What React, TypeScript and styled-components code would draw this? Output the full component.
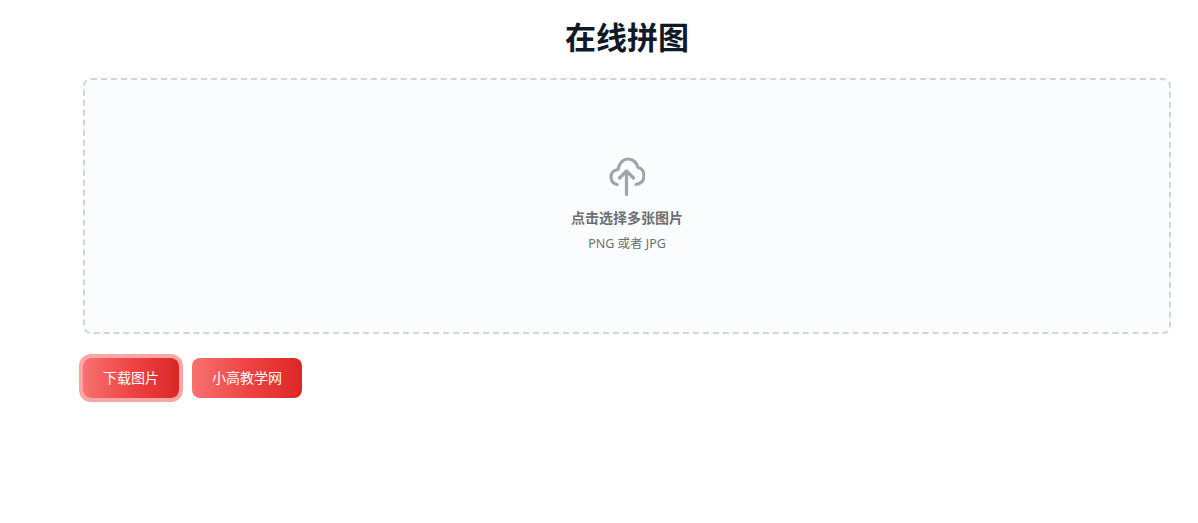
import styled, { createGlobalStyle } from "styled-components";

const GlobalStyle = createGlobalStyle`
  html, body {
    margin: 0;
    padding: 0;
    background: #fff;
    font-family: "Noto Sans", "Noto Sans CJK SC", sans-serif;
  }
`;

const Page = styled.div`
  box-sizing: border-box;
  min-height: 100vh;
  padding: 16px 27px 0 83px;
`;

const Title = styled.h1`
  margin: 0 0 20px;
  text-align: center;
  font-size: 31px;
  line-height: 42px;
  font-weight: 700;
  color: #111827;
`;

const DropZone = styled.label`
  display: flex;
  flex-direction: column;
  align-items: center;
  justify-content: center;
  box-sizing: border-box;
  height: 256px;
  padding-bottom: 1px;
  border: 2px dashed #d1d5db;
  border-radius: 8px;
  background: #fbfcfe;
  cursor: pointer;
`;

const UploadIcon = styled.svg`
  display: block;
  width: 36px;
  height: 40px;
  margin-bottom: 11px;
  fill: none;
  stroke: #9fa4a7;
  stroke-width: 3.2;
  stroke-linecap: round;
  stroke-linejoin: round;
`;

const Hint = styled.p`
  margin: 0 0 6px;
  font-size: 14px;
  line-height: 20px;
  font-weight: 600;
  color: #6b7073;
`;

const SubHint = styled.p`
  margin: 0;
  font-size: 12.5px;
  line-height: 20px;
  color: #6b7073;
`;

const Actions = styled.div`
  display: flex;
  gap: 13px;
  margin-top: 24px;
`;

const Button = styled.button<{ $focused?: boolean }>`
  height: 40px;
  padding: 0 20px 2px;
  border: 0;
  border-radius: 8px;
  font-family: inherit;
  font-size: 14px;
  color: #fff;
  background: linear-gradient(to right, #f87171, #ef4444, #dc2626);
  box-shadow: ${(props) => (props.$focused ? "0 0 0 4px #fca5a5" : "none")};
  cursor: pointer;
`;

const App = () => {
  return (
    <Page>
      <GlobalStyle />
      <Title>在线拼图</Title>
      <DropZone>
        <UploadIcon viewBox="0 0 36 40">
          <path d="M8 27.5C4 26.5 2 23.5 2 20C2 16 5 13 9 12.5C10 6.5 14 2 19 2C24 2 28 6 29 10.5C32.5 11 35 14.5 35 19C35 23.5 32 26.5 27 27.5" />
          <path d="M17.5 15V37.5" />
          <path d="M10.5 21L17.5 14L24.5 21" />
        </UploadIcon>
        <Hint>点击选择多张图片</Hint>
        <SubHint>PNG 或者 JPG</SubHint>
      </DropZone>
      <Actions>
        <Button $focused>下载图片</Button>
        <Button>小高教学网</Button>
      </Actions>
    </Page>
  );
};

export default App;
